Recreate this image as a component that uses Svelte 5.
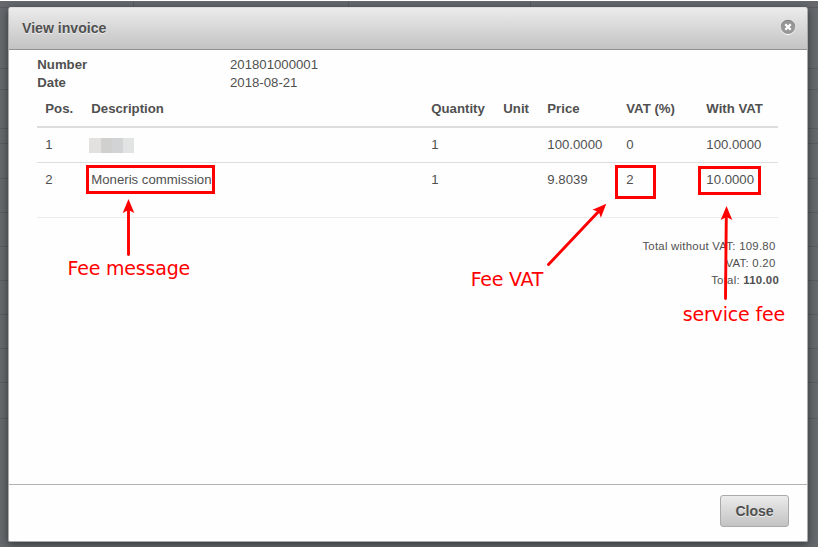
<script>
  const columns = ['Pos.', 'Description', 'Quantity', 'Unit', 'Price', 'VAT (%)', 'With VAT'];
  const rows = [
    ['1', null, '1', '', '100.0000', '0', '100.0000'],
    ['2', 'Moneris commission', '1', '', '9.8039', '2', '10.0000']
  ];
  const widths = [46, 340, 72, 44, 79, 80, 80];
  const gridLines = [7, 68, 89, 128, 143, 178, 212, 246, 280, 314, 348, 382, 418];
</script>

<div class="page">
  <svg class="backdrop" width="818" height="547" aria-hidden="true">
    {#each gridLines as y}
      <rect x="0" {y} width="818" height="1" />
    {/each}
    {#each [133, 348, 530] as x}
      <rect {x} y="1" width="1" height="6" />
    {/each}
  </svg>

  <section class="modal">
    <header>
      <h1>View invoice</h1>
      <svg class="dismiss" width="18" height="18" viewBox="0 0 18 18">
        <circle cx="9" cy="9.9" r="7.3" fill="#f4f4f4" />
        <circle cx="9" cy="9" r="7.1" fill="#979797" />
        <path d="M2.5 7.5A6.7 6.7 0 0 1 15.5 7.5" fill="none" stroke="#808080" />
        <path d="M6.3 6.3l5.4 5.4M11.7 6.3l-5.4 5.4" stroke="#fff" stroke-width="2.3" />
      </svg>
    </header>

    <main>
      <dl>
        <dt>Number</dt><dd>201801000001</dd>
        <dt>Date</dt><dd>2018-08-21</dd>
      </dl>
      <table>
        <colgroup>
          {#each widths as w}<col style="width: {w}px" />{/each}
        </colgroup>
        <thead>
          <tr>{#each columns as c}<th>{c}</th>{/each}</tr>
        </thead>
        <tbody>
          {#each rows as row}
            <tr>
              {#each row as cell}
                <td>{#if cell === null}<span class="redacted"></span>{:else}{cell}{/if}</td>
              {/each}
            </tr>
          {/each}
        </tbody>
      </table>
      <div class="totals">
        <p>Total without VAT: 109.80</p>
        <p>VAT: 0.20</p>
        <p class="grand">Total: <b>110.00</b></p>
      </div>
    </main>

    <footer><button>Close</button></footer>
  </section>

  <svg class="notes" width="818" height="547" viewBox="0 0 818 547">
    <g fill="none" stroke="#f00" stroke-width="3">
      <rect x="87.5" y="166.5" width="126" height="26" />
      <rect x="616.5" y="166.5" width="38" height="31" />
      <rect x="699.5" y="167.5" width="60" height="26" />
      <g stroke-linecap="round" stroke-width="2.9">
        <path d="M128.5 254.5V208" />
        <path d="M548.5 264.5L600 210" />
        <path d="M725.5 298.5L726.3 216" />
      </g>
    </g>
    <g fill="#f00">
      <path d="M0 0L5.8 14L0 11L-5.8 14Z" transform="translate(128.5 199)" />
      <path d="M0 0L5.8 14L0 11L-5.8 14Z" transform="translate(606.3 203.7) rotate(43.5)" />
      <path d="M0 0L5.8 14L0 11L-5.8 14Z" transform="translate(726.5 206)" />
      <text x="67.6" y="275" textLength="122.6">Fee message</text>
      <text x="470.7" y="286" textLength="72.6">Fee VAT</text>
      <text x="682.7" y="321" textLength="102.6">service fee</text>
    </g>
  </svg>
</div>

<style>
  :global(body) { margin: 0; background: #fff; }
  .page {
    position: relative;
    box-sizing: border-box;
    width: 818px;
    height: 547px;
    padding: 7px 0 0 8px;
    overflow: hidden;
    background: linear-gradient(#fff 1px, #65696d 1px);
    font: 13.2px/18px "Liberation Sans", Arial, sans-serif;
    color: #505050;
  }
  .backdrop, .notes { position: absolute; left: 0; top: 0; }
  .backdrop { fill: #595d61; }
  .modal {
    position: relative;
    display: flex;
    flex-direction: column;
    box-sizing: border-box;
    width: 800px;
    height: 535px;
    background: #fefefe;
    border: 1px solid #aaa;
    border-top-color: #ddd;
    border-radius: 3px 3px 2px 2px;
    box-shadow: 0 2px 9px rgba(0, 0, 0, 0.5);
    clip-path: inset(-6px -20px -20px -20px);
  }
  header {
    display: flex;
    align-items: center;
    justify-content: space-between;
    box-sizing: border-box;
    height: 42px;
    padding: 0 10px 0 13px;
    border-bottom: 1px solid #929292;
    border-radius: 2px 2px 0 0;
    background: linear-gradient(#ebebeb, #c3c3c3);
  }
  h1 {
    margin: 0 0 2px;
    font-size: 14.1px;
    text-shadow: 0 1px 0 rgba(255, 255, 255, 0.6);
  }
  .dismiss { margin-bottom: 3px; }
  main { flex: 1; padding: 6px 28px 0; }
  dl { display: grid; grid-template-columns: 193px auto; margin: 0; }
  dt { font-weight: bold; text-indent: 0.3px; }
  dd { margin: 0; }
  table {
    width: 741px;
    table-layout: fixed;
    border-collapse: separate;
    border-spacing: 0;
  }
  th, td {
    box-sizing: border-box;
    padding: 8px 0 8px 8.3px;
    text-align: left;
    vertical-align: top;
    white-space: nowrap;
  }
  th { height: 36px; border-bottom: 2px solid #ddd; }
  td { height: 35px; border-bottom: 1px solid #ddd; }
  tr:last-child td { height: 55px; border-color: #ebebeb; }
  .redacted {
    display: block;
    width: 45px;
    height: 15px;
    margin: 2px 0 0 -2.3px;
    background: linear-gradient(90deg, #e2e1e0 12px, #d0d0cf 12px 23px, #d2d3d5 23px 34px, #e2e4e4 34px);
  }
  .totals {
    width: 742px;
    margin-top: 20px;
    font-size: 11.4px;
    letter-spacing: 0.25px;
    line-height: 17px;
    text-align: right;
  }
  .totals p { margin: 0; padding-right: 3.5px; }
  .totals .grand { padding-right: 0; }
  footer {
    display: flex;
    justify-content: flex-end;
    box-sizing: border-box;
    height: 57px;
    padding: 10px 18px 0;
    border-top: 1px solid #b2b2b2;
  }
  button {
    width: 69px;
    height: 32px;
    padding: 0;
    border: 1px solid #aaa;
    border-radius: 3px;
    background: linear-gradient(#ebebeb, #c3c3c3);
    color: #505050;
    font: bold 14px "Liberation Sans", Arial, sans-serif;
    text-shadow: 0 1px 0 rgba(255, 255, 255, 0.6);
  }
  .notes { pointer-events: none; }
  .notes text { font: 19px "DejaVu Sans", sans-serif; }
</style>
